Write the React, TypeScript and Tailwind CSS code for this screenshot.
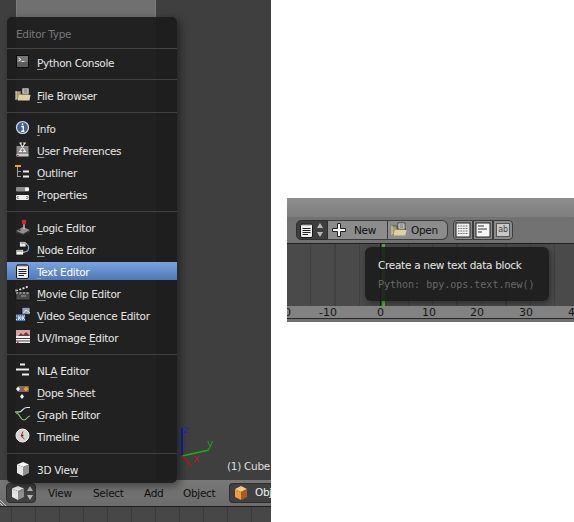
import type { ReactNode } from "react";

const font = "font-['DejaVu_Sans',sans-serif]";
const label = "text-[10.5px] tracking-[-0.3px]";

function Svg({ children, className = "" }: { children: ReactNode; className?: string }) {
  return (
    <svg viewBox="0 0 16 16" className={`w-4 h-4 shrink-0 ${className}`}>
      {children}
    </svg>
  );
}

const PythonIcon = () => (
  <Svg>
    <rect x="1.5" y="1.5" width="12" height="12" fill="#777" stroke="#0c0c0c" />
    <rect x="2" y="8" width="11" height="5" fill="#5c5c5c" />
    <path d="M3.5 4 L6 5.5 L3.5 7" stroke="#eee" fill="none" />
    <path d="M6.5 7.5 H9.5" stroke="#ddd" />
  </Svg>
);
const FolderIcon = ({ className }: { className?: string }) => (
  <Svg className={className}>
    <rect x="7" y="1" width="7" height="7" fill="#ddd" stroke="#222" strokeWidth="0.7" />
    <path d="M8.5 3 H12.5 M8.5 5 H12.5" stroke="#555" />
    <path d="M1 4 H6 V7 H14.5 V12.5 H1 Z" fill="#a79c6f" stroke="#222" strokeWidth="0.5" />
    <path d="M4 8 H15.5 L14.5 13.5 H2.5 Z" fill="#dcd2a0" />
    <path d="M1 4 V13" stroke="#f3edc8" />
  </Svg>
);
const InfoIcon = () => (
  <Svg>
    <circle cx="7.5" cy="7.5" r="6" fill="#3c5f98" stroke="#d8dce6" strokeWidth="1.2" />
    <path d="M7.5 3.3 V5 M6.2 6.5 H8.3 V11 M6.2 11.2 H9.4" stroke="#fff" strokeWidth="1.4" fill="none" />
  </Svg>
);
const PrefsIcon = () => (
  <Svg>
    <rect x="1.5" y="4" width="12" height="10" fill="#8a8a8a" />
    <rect x="1.5" y="12" width="12" height="2.5" fill="#c9c9c9" />
    <rect x="2" y="13" width="1.5" height="1" fill="#c22" />
    <path d="M5 1 L10 9 M10 1 L5 9 M4.5 1 H7 M8 1 H11 M4 9.5 H7 M8 9.5 H11" stroke="#f0f0f0" strokeWidth="1.1" />
  </Svg>
);
const OutlinerIcon = () => (
  <Svg>
    <rect x="0" y="1" width="6" height="2" fill="#f0a030" />
    <path d="M2.5 3 V13 M2.5 7.5 H6 M2.5 12.5 H6" stroke="#bbb" strokeWidth="0.8" />
    <rect x="8" y="6.5" width="6" height="2" fill="#eee" />
    <rect x="8" y="11.5" width="6" height="2" fill="#eee" />
  </Svg>
);
const PropertiesIcon = () => (
  <Svg>
    <rect x="1" y="1" width="13" height="4.5" rx="1" fill="#8c8c8c" />
    <rect x="10" y="1.5" width="4" height="3.5" rx="1" fill="#f2f2f2" />
    <rect x="1" y="9" width="13" height="5" rx="1" fill="#efefef" />
    <path d="M3.5 10 L2 11.5 L3.5 13 M11.5 10 L13 11.5 L11.5 13" stroke="#333" fill="none" />
  </Svg>
);
const LogicIcon = () => (
  <Svg>
    <path d="M1 12 L8 8 L15 11 L8 15 Z" fill="#8f8f8f" />
    <path d="M1 12 L8 15 L15 11 V12.5 L8 16 L1 13.5 Z" fill="#3d3d3d" />
    <path d="M9 3 V10" stroke="#ccc" strokeWidth="1.4" />
    <circle cx="9" cy="3" r="2.4" fill="#d8212a" />
    <rect x="3.5" y="10.5" width="2" height="1.2" fill="#222" />
  </Svg>
);
const NodeIcon = () => (
  <Svg>
    <path d="M10 3 C15 3 15 11 9 11" stroke="#7aa5dc" fill="none" strokeWidth="1.2" />
    <rect x="4.5" y="0.5" width="6.5" height="5.5" fill="#e8e8e8" stroke="#111" strokeWidth="0.7" />
    <path d="M5.5 2 H10" stroke="#777" />
    <rect x="1" y="8.5" width="7.5" height="5.5" fill="#f2f2f2" stroke="#111" strokeWidth="0.7" />
    <path d="M2 10 H7.5" stroke="#777" />
    <rect x="10.5" y="2" width="1.5" height="1.5" fill="#f0a030" />
    <rect x="8" y="10.5" width="1.5" height="1.5" fill="#f0a030" />
  </Svg>
);
const TextIcon = () => (
  <Svg>
    <rect x="1.5" y="2" width="12" height="13.5" rx="1.5" fill="#eee" stroke="#16181d" />
    <path d="M3 1 V3.5 M5 1 V3.5 M7 1 V3.5 M9 1 V3.5 M11 1 V3.5" stroke="#333" strokeWidth="0.9" />
    <path d="M3.5 6.5 H11.5 M3.5 8.5 H11.5 M3.5 10.5 H11.5 M3.5 12.5 H9" stroke="#222" strokeWidth="1.1" />
  </Svg>
);
const MovieIcon = () => (
  <Svg>
    <path d="M1 6 L13 1.5" stroke="#ddd" strokeWidth="1.8" strokeDasharray="2 1.5" />
    <rect x="1" y="6.5" width="14" height="8.5" fill="#4a4a4a" stroke="#111" strokeWidth="0.7" />
    <path d="M1 8 H15" stroke="#ccc" strokeDasharray="2 1.5" />
    <path d="M6 11 H11" stroke="#999" />
    <path d="M1 4 V7" stroke="#6a9ad8" strokeWidth="1.2" />
  </Svg>
);
const VideoIcon = () => (
  <Svg>
    <rect x="7" y="0.5" width="8" height="7" fill="#8fa2b8" stroke="#111" strokeWidth="0.6" />
    <path d="M8 7 L11 3 L15 6" stroke="#e8e8e8" fill="none" />
    <rect x="0.5" y="7" width="10" height="7.5" fill="#4d7cb8" stroke="#0f0f0f" strokeWidth="0.6" />
    <path d="M1 9 H10 M1 12.5 H10" stroke="#eef" strokeDasharray="1 1" />
    <rect x="3" y="9.5" width="2.5" height="2.6" fill="#cfe0f4" />
    <rect x="6.5" y="9.5" width="2.5" height="2.6" fill="#cfe0f4" />
  </Svg>
);
const ImageIcon = () => (
  <Svg>
    <rect x="1" y="1" width="14" height="13" fill="#f2f2f2" />
    <rect x="1" y="1" width="14" height="6" fill="#d9a0a0" />
    <path d="M3 7 L6 4 L8 6 L11 3 L15 7 Z" fill="#6d3b3b" />
    <path d="M1 9.5 H15 M1 12 H15" stroke="#444" />
    <rect x="2" y="12.5" width="1.5" height="1.5" fill="#d22" />
  </Svg>
);
const NlaIcon = () => (
  <Svg>
    <rect x="5" y="1.5" width="5" height="2" fill="#eee" />
    <rect x="1" y="6.5" width="13" height="2" fill="#eee" />
    <rect x="7" y="11.5" width="7" height="2" fill="#eee" />
  </Svg>
);
const DopeIcon = () => (
  <Svg>
    <rect x="3" y="2" width="11" height="6" rx="1" fill="#7d6a55" />
    <path d="M3 2.5 L5 5 L3 7.5 L1 5 Z" fill="#f2f2f2" />
    <path d="M11 2.5 L13.5 5 L11 7.5 L8.5 5 Z" fill="#f0a030" />
    <path d="M7 10 L9 12.5 L7 15 L5 12.5 Z" fill="#f2f2f2" />
  </Svg>
);
const GraphIcon = () => (
  <Svg>
    <path d="M0 6 H4 C8 6 7 1.5 12 1.5 H15" stroke="#eee" fill="none" strokeWidth="1.1" />
    <path d="M1 7 C5 7 5 14 9 14 C12 14 12 10 15 10" stroke="#8cc070" fill="none" strokeWidth="1.1" />
  </Svg>
);
const ClockIcon = () => (
  <Svg>
    <circle cx="7.5" cy="7.5" r="6.5" fill="#d5d5d5" stroke="#f4f4f4" />
    <path d="M8 3.5 L6 8 L9.5 11" stroke="#c22" fill="none" />
    <circle cx="7.5" cy="7.5" r="1" fill="#333" />
  </Svg>
);
const CubeIcon = ({ className }: { className?: string }) => (
  <Svg className={className}>
    <path d="M2 3.5 L8 1 L14 3.5 L8 6 Z" fill="#fafafa" />
    <path d="M2 3.5 L8 6 V15 L2 12 Z" fill="#e6e6e6" />
    <path d="M14 3.5 L8 6 V15 L14 12 Z" fill="#909090" />
  </Svg>
);
const OrangeCube = () => (
  <Svg>
    <path d="M2 4 L8 1 L14 4 L8 7 Z" fill="#f7c68c" />
    <path d="M2 4 L8 7 V15 L2 12 Z" fill="#eb9a45" />
    <path d="M14 4 L8 7 V15 L14 12 Z" fill="#a85d1c" />
  </Svg>
);

type Item = { before: string; key?: string; after: string; icon: ReactNode; active?: boolean };

const groups: Item[][] = [
  [{ before: "", key: "P", after: "ython Console", icon: <PythonIcon /> }],
  [{ before: "", key: "F", after: "ile Browser", icon: <FolderIcon /> }],
  [
    { before: "", key: "I", after: "nfo", icon: <InfoIcon /> },
    { before: "", key: "U", after: "ser Preferences", icon: <PrefsIcon /> },
    { before: "", key: "O", after: "utliner", icon: <OutlinerIcon /> },
    { before: "P", key: "r", after: "operties", icon: <PropertiesIcon /> },
  ],
  [
    { before: "", key: "L", after: "ogic Editor", icon: <LogicIcon /> },
    { before: "", key: "N", after: "ode Editor", icon: <NodeIcon /> },
    { before: "", key: "T", after: "ext Editor", icon: <TextIcon />, active: true },
    { before: "", key: "M", after: "ovie Clip Editor", icon: <MovieIcon /> },
    { before: "", key: "V", after: "ideo Sequence Editor", icon: <VideoIcon /> },
    { before: "UV/Image ", key: "E", after: "ditor", icon: <ImageIcon /> },
  ],
  [
    { before: "NL", key: "A", after: " Editor", icon: <NlaIcon /> },
    { before: "", key: "D", after: "ope Sheet", icon: <DopeIcon /> },
    { before: "", key: "G", after: "raph Editor", icon: <GraphIcon /> },
    { before: "Timeline", after: "", icon: <ClockIcon /> },
  ],
  [{ before: "3D Vie", key: "w", after: "", icon: <CubeIcon /> }],
];

function MenuRow({ item }: { item: Item }) {
  return (
    <div className="h-[22px] pt-px">
      <div
        className={`h-[18px] pl-2 flex items-center gap-[6px] ${label} ${
          item.active ? "bg-gradient-to-b from-[#7ba3e0] to-[#4f78b8] text-white" : "text-[#e6e6e6]"
        }`}
      >
        {item.icon}
        <span className="whitespace-pre pt-[3px]">
          {item.before}
          {item.key && <span className="underline underline-offset-2 decoration-[#9a9a9a]">{item.key}</span>}
          {item.after}
        </span>
      </div>
    </div>
  );
}

function EditorMenu() {
  return (
    <div className="absolute left-[7px] top-[17px] w-[170px] h-[466px] rounded-[5px] bg-[#1c1c1c]/95 shadow-[3px_3px_8px_rgba(0,0,0,0.45)]">
      <div className={`h-[32px] pl-[9px] pt-[4px] flex items-center text-[#777777] border-b border-[#444444] ${label}`}>
        Editor Type
      </div>
      <div className="pt-[3px]">
        {groups.map((group, i) => (
          <div key={i}>
            {i > 0 && (
              <div className="h-[11px] flex items-center">
                <div className="h-px w-full bg-[#404040]" />
              </div>
            )}
            {group.map((item) => (
              <MenuRow key={item.before + item.after} item={item} />
            ))}
          </div>
        ))}
      </div>
    </div>
  );
}

function Updown({ tone = "#b8b8b8" }: { tone?: string }) {
  return (
    <svg viewBox="0 0 8 16" className="w-2 h-4 shrink-0">
      <path d="M4 1 L7 6 H1 Z M4 15 L7 10 H1 Z" fill={tone} />
    </svg>
  );
}

function LeftPanel() {
  return (
    <div className="relative w-[271px] h-[522px] shrink-0 flex flex-col overflow-hidden bg-[#3f3f3f]">
      <div className="relative flex-1 px-4">
        <div className="w-[140px] h-full bg-[#707070] border-x border-[#7c7c7c]" />
        <svg viewBox="0 0 60 50" className="absolute left-[175px] top-[420px] w-[60px] h-[50px]">
          <path d="M7 8 V36" stroke="#1010c8" strokeWidth="1.6" />
          <path d="M7 36 L34 30" stroke="#17b017" strokeWidth="1.6" />
          <path d="M7 36 L17 46" stroke="#b01818" strokeWidth="1.2" />
        </svg>
        <span className="absolute left-[183px] top-[424px] text-[11px] leading-none text-[#2525c0]">z</span>
        <span className="absolute left-[207px] top-[438px] text-[11px] leading-none text-[#1aa01a]">y</span>
        <span className="absolute left-[193px] top-[453px] text-[11px] leading-none text-[#b02020]">x</span>
        <span className={`absolute left-[227px] top-[459px] leading-[14px] whitespace-nowrap text-[#dddddd] ${label}`}>
          (1) Cube
        </span>
      </div>
      <div className={`relative h-[27px] shrink-0 flex items-center bg-gradient-to-b from-[#787878] to-[#6c6c6c] border-b border-[#1e1e1e] text-[#101010] ${label}`}>
        <div className="ml-[6px] w-[30px] h-[20px] flex items-center pl-[3px] rounded-[4px] bg-[#404040] border border-[#2e2e2e]">
          <CubeIcon />
          <Updown />
        </div>
        <span className="w-[45px] ml-3 pt-px">View</span>
        <span className="w-[51px] pt-px">Select</span>
        <span className="w-[39px] pt-px">Add</span>
        <span className="w-[46px] pt-px">Object</span>
        <div className="w-[42px] h-[20px] flex items-center gap-[6px] pl-[3px] rounded-l-[4px] bg-[#404040] border-y border-l border-[#2e2e2e] text-[#f0f0f0] shrink-0">
          <OrangeCube />
          <span>Obj</span>
        </div>
        <svg viewBox="0 0 8 8" className="absolute left-0 bottom-0 w-2 h-2">
          <path d="M0 2 L6 8 M0 5 L3 8" stroke="#c8c8c8" />
        </svg>
      </div>
      <div className="h-[15px] shrink-0 bg-[#474747] bg-[repeating-linear-gradient(90deg,transparent_0,transparent_11px,#3a3a3a_11px,#3a3a3a_12px,transparent_12px,transparent_24px)]" />
    </div>
  );
}

function ViewToggle({ children }: { children: ReactNode }) {
  return (
    <div className="w-5 h-5 flex items-center justify-center bg-[#8a8a8a] border border-[#3c3c3c] first:rounded-l-[4px] last:rounded-r-[4px]">
      {children}
    </div>
  );
}

function RightPanel() {
  return (
    <div className="relative w-[287px] h-[124px] mt-[198px] flex flex-col overflow-hidden bg-[#4a4a4a]">
      <div className="h-[19px] shrink-0 bg-gradient-to-b from-[#8e8e8e] to-[#7e7e7e]" />
      <div className={`h-[27px] shrink-0 flex items-center pl-[9px] bg-[#727272] border-b border-[#1e1e1e] text-[#101010] ${label}`}>
        <div className="w-[32px] h-[20px] flex items-center pl-[2px] gap-px rounded-l-[5px] bg-[#3e3e3e] border border-[#2e2e2e]">
          <TextIcon />
          <Updown />
        </div>
        <div className="w-[60px] h-[20px] flex items-center pl-[3px] gap-[7px] bg-[#8c8c8c] border-y border-r border-[#3c3c3c]">
          <svg viewBox="0 0 16 16" className="w-4 h-4 shrink-0">
            <path d="M6.5 1.5 H9.5 V6.5 H14.5 V9.5 H9.5 V14.5 H6.5 V9.5 H1.5 V6.5 H6.5 Z" fill="#f4f4f4" stroke="#222" />
          </svg>
          <span className="pt-[2px]">New</span>
        </div>
        <div className="w-[60px] h-[20px] flex items-center pl-[3px] gap-[4px] rounded-r-[6px] bg-[#8c8c8c] border-y border-r border-[#3c3c3c]">
          <FolderIcon />
          <span className="pt-[2px]">Open</span>
        </div>
        <div className="ml-[5px] flex">
          <ViewToggle>
            <svg viewBox="0 0 16 16" className="w-4 h-4">
              <rect x="1" y="1" width="14" height="14" fill="#efefef" stroke="#222" />
              <path d="M3 4 H13 M3 6.5 H13 M3 9 H13 M3 11.5 H13" stroke="#666" strokeDasharray="1 0.6" />
            </svg>
          </ViewToggle>
          <ViewToggle>
            <svg viewBox="0 0 16 16" className="w-4 h-4">
              <rect x="1" y="1" width="14" height="14" fill="#f6f6f6" stroke="#222" />
              <path d="M3 4 H9 M3 7 H12 M3 10 H7" stroke="#333" strokeWidth="1.2" />
            </svg>
          </ViewToggle>
          <ViewToggle>
            <div className="w-[14px] h-[14px] bg-[#c8c8c8] border border-[#555] flex items-center justify-center text-[8px] leading-none text-[#444]">
              ab
            </div>
          </ViewToggle>
        </div>
      </div>
      <div className="relative h-[62px] shrink-0 bg-[#4a4a4a] bg-[repeating-linear-gradient(90deg,transparent_0,transparent_23px,#414141_23px,#414141_24.4px)]">
        <div className="absolute left-[93px] top-0 w-px h-full bg-[#1a1a1a]" />
        <div className="absolute left-[95px] top-0 w-[3px] h-full bg-[#55b03a]" />
        <div className="absolute left-[78px] top-[3px] w-[184px] h-[54px] pl-[13px] pt-[10px] rounded-[6px] bg-[#1c1c1c]/90 shadow-[1px_2px_6px_rgba(0,0,0,0.4)]">
          <div className={`leading-[16px] text-[#e8e8e8] whitespace-nowrap ${label}`}>Create a new text data block</div>
          <div className="mt-[5px] font-['DejaVu_Sans_Mono',monospace] text-[10px] leading-[14px] text-[#686868] whitespace-nowrap">
            Python: bpy.ops.text.new()
          </div>
        </div>
      </div>
      <div className="relative h-[12px] shrink-0 bg-[#828282] border-b border-[#2a2a2a] box-content text-[11px] leading-[14px] text-[#161616]">
        <span className="absolute -left-[3px] top-0">0</span>
        <span className="absolute left-[32px] top-0">-10</span>
        <span className="absolute left-[90px] top-0">0</span>
        <span className="absolute left-[135px] top-0">10</span>
        <span className="absolute left-[183px] top-0">20</span>
        <span className="absolute left-[232px] top-0">30</span>
        <span className="absolute left-[281px] top-0">40</span>
      </div>
      <div className="flex-1 bg-[#707070]" />
    </div>
  );
}

export default function App() {
  return (
    <div className={`relative w-[574px] h-[522px] flex gap-4 bg-white ${font}`}>
      <LeftPanel />
      <RightPanel />
      <EditorMenu />
    </div>
  );
}
